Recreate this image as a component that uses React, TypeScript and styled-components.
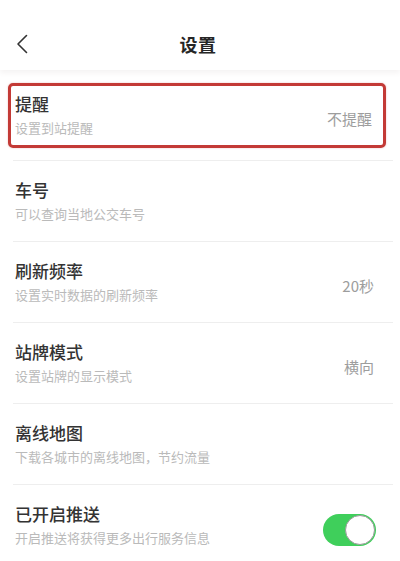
import React from "react";
import styled, { createGlobalStyle } from "styled-components";

const Global = createGlobalStyle`
  html, body { margin: 0; padding: 0; background: #fff; }
  body { font-family: "Noto Sans CJK SC", "Noto Sans", sans-serif; -webkit-font-smoothing: antialiased; }
  * { box-sizing: border-box; }
`;

const Page = styled.div`
  width: 400px;
  height: 561px;
  overflow: hidden;
  background: #fff;
  display: flex;
  flex-direction: column;
`;

const Header = styled.header`
  height: 70px;
  flex: none;
  display: grid;
  grid-template-columns: 60px 1fr 60px;
  align-items: center;
  padding-top: 18px;
  box-shadow: 0 3px 5px rgba(120, 90, 90, 0.07);
  position: relative;
  z-index: 1;
`;

const BackButton = styled.button`
  border: none;
  background: none;
  padding: 0 0 0 16px;
  display: flex;
  align-items: center;
  height: 30px;
  cursor: pointer;
`;

const Title = styled.h1`
  margin: 0 0 0 -4px;
  text-align: center;
  font-size: 18px;
  font-weight: 600;
  color: #262626;
  letter-spacing: 0.5px;
`;

const List = styled.div`
  display: flex;
  flex-direction: column;
`;

const Highlight = styled.div`
  margin: 13px 14px 12px 8px;
  height: 65px;
  border: 3px solid #c33a36;
  border-radius: 5px;
  display: flex;
  align-items: center;
  justify-content: space-between;
  padding: 0 11px 0 4px;
  box-shadow: 0 0 2px rgba(195, 58, 54, 0.35);
`;

const Divider = styled.div`
  height: 1px;
  margin: 0 7px 0 13px;
  background: #eeeeee;
`;

const Row = styled.div`
  height: 80px;
  display: flex;
  align-items: center;
  justify-content: space-between;
  padding: 0 26px 0 15px;
`;

const TextBlock = styled.div<{ $shift?: number }>`
  display: flex;
  flex-direction: column;
  gap: 4px;
  margin-top: ${(p) => p.$shift ?? 0}px;
`;

const ItemTitle = styled.div`
  font-size: 17px;
  line-height: 22px;
  font-weight: 500;
  color: #333;
`;

const ItemSub = styled.div`
  font-size: 13px;
  line-height: 18px;
  color: #bababa;
`;

const Value = styled.div`
  font-size: 15px;
  color: #9d9d9d;
  margin-top: 6px;
`;

const Switch = styled.div<{ $on: boolean }>`
  width: 53px;
  height: 32px;
  border-radius: 16px;
  background: ${(p) => (p.$on ? "#3fcf5b" : "#e5e5e5")};
  display: flex;
  align-items: center;
  justify-content: ${(p) => (p.$on ? "flex-end" : "flex-start")};
  padding: 1px;
  margin-top: 10px;
  margin-right: -2px;
`;

const Knob = styled.div`
  width: 30px;
  height: 30px;
  border-radius: 50%;
  background: #fff;
  border: 1.5px solid #9a9a9a;
`;

type Item = { title: string; sub: string; value?: string; toggle?: boolean };

const items: Item[] = [
  { title: "车号", sub: "可以查询当地公交车号" },
  { title: "刷新频率", sub: "设置实时数据的刷新频率", value: "20秒" },
  { title: "站牌模式", sub: "设置站牌的显示模式", value: "横向" },
  { title: "离线地图", sub: "下载各城市的离线地图，节约流量" },
  { title: "已开启推送", sub: "开启推送将获得更多出行服务信息", toggle: true },
];

export default function App() {
  return (
    <>
      <Global />
      <Page>
        <Header>
          <BackButton aria-label="返回">
            <svg width="12" height="20" viewBox="0 0 12 20">
              <polyline points="10.5,1.5 2,10 10.5,18.5" fill="none" stroke="#333" strokeWidth="1.6" strokeLinecap="round" strokeLinejoin="round" />
            </svg>
          </BackButton>
          <Title>设置</Title>
          <div />
        </Header>
        <List>
          <Highlight>
            <TextBlock $shift={-2}>
              <ItemTitle>提醒</ItemTitle>
              <ItemSub>设置到站提醒</ItemSub>
            </TextBlock>
            <Value>不提醒</Value>
          </Highlight>
          {items.map((it) => (
            <React.Fragment key={it.title}>
              <Divider />
              <Row>
                <TextBlock>
                  <ItemTitle>{it.title}</ItemTitle>
                  <ItemSub>{it.sub}</ItemSub>
                </TextBlock>
                {it.value && <Value>{it.value}</Value>}
                {it.toggle && (
                  <Switch $on>
                    <Knob />
                  </Switch>
                )}
              </Row>
            </React.Fragment>
          ))}
        </List>
      </Page>
    </>
  );
}
